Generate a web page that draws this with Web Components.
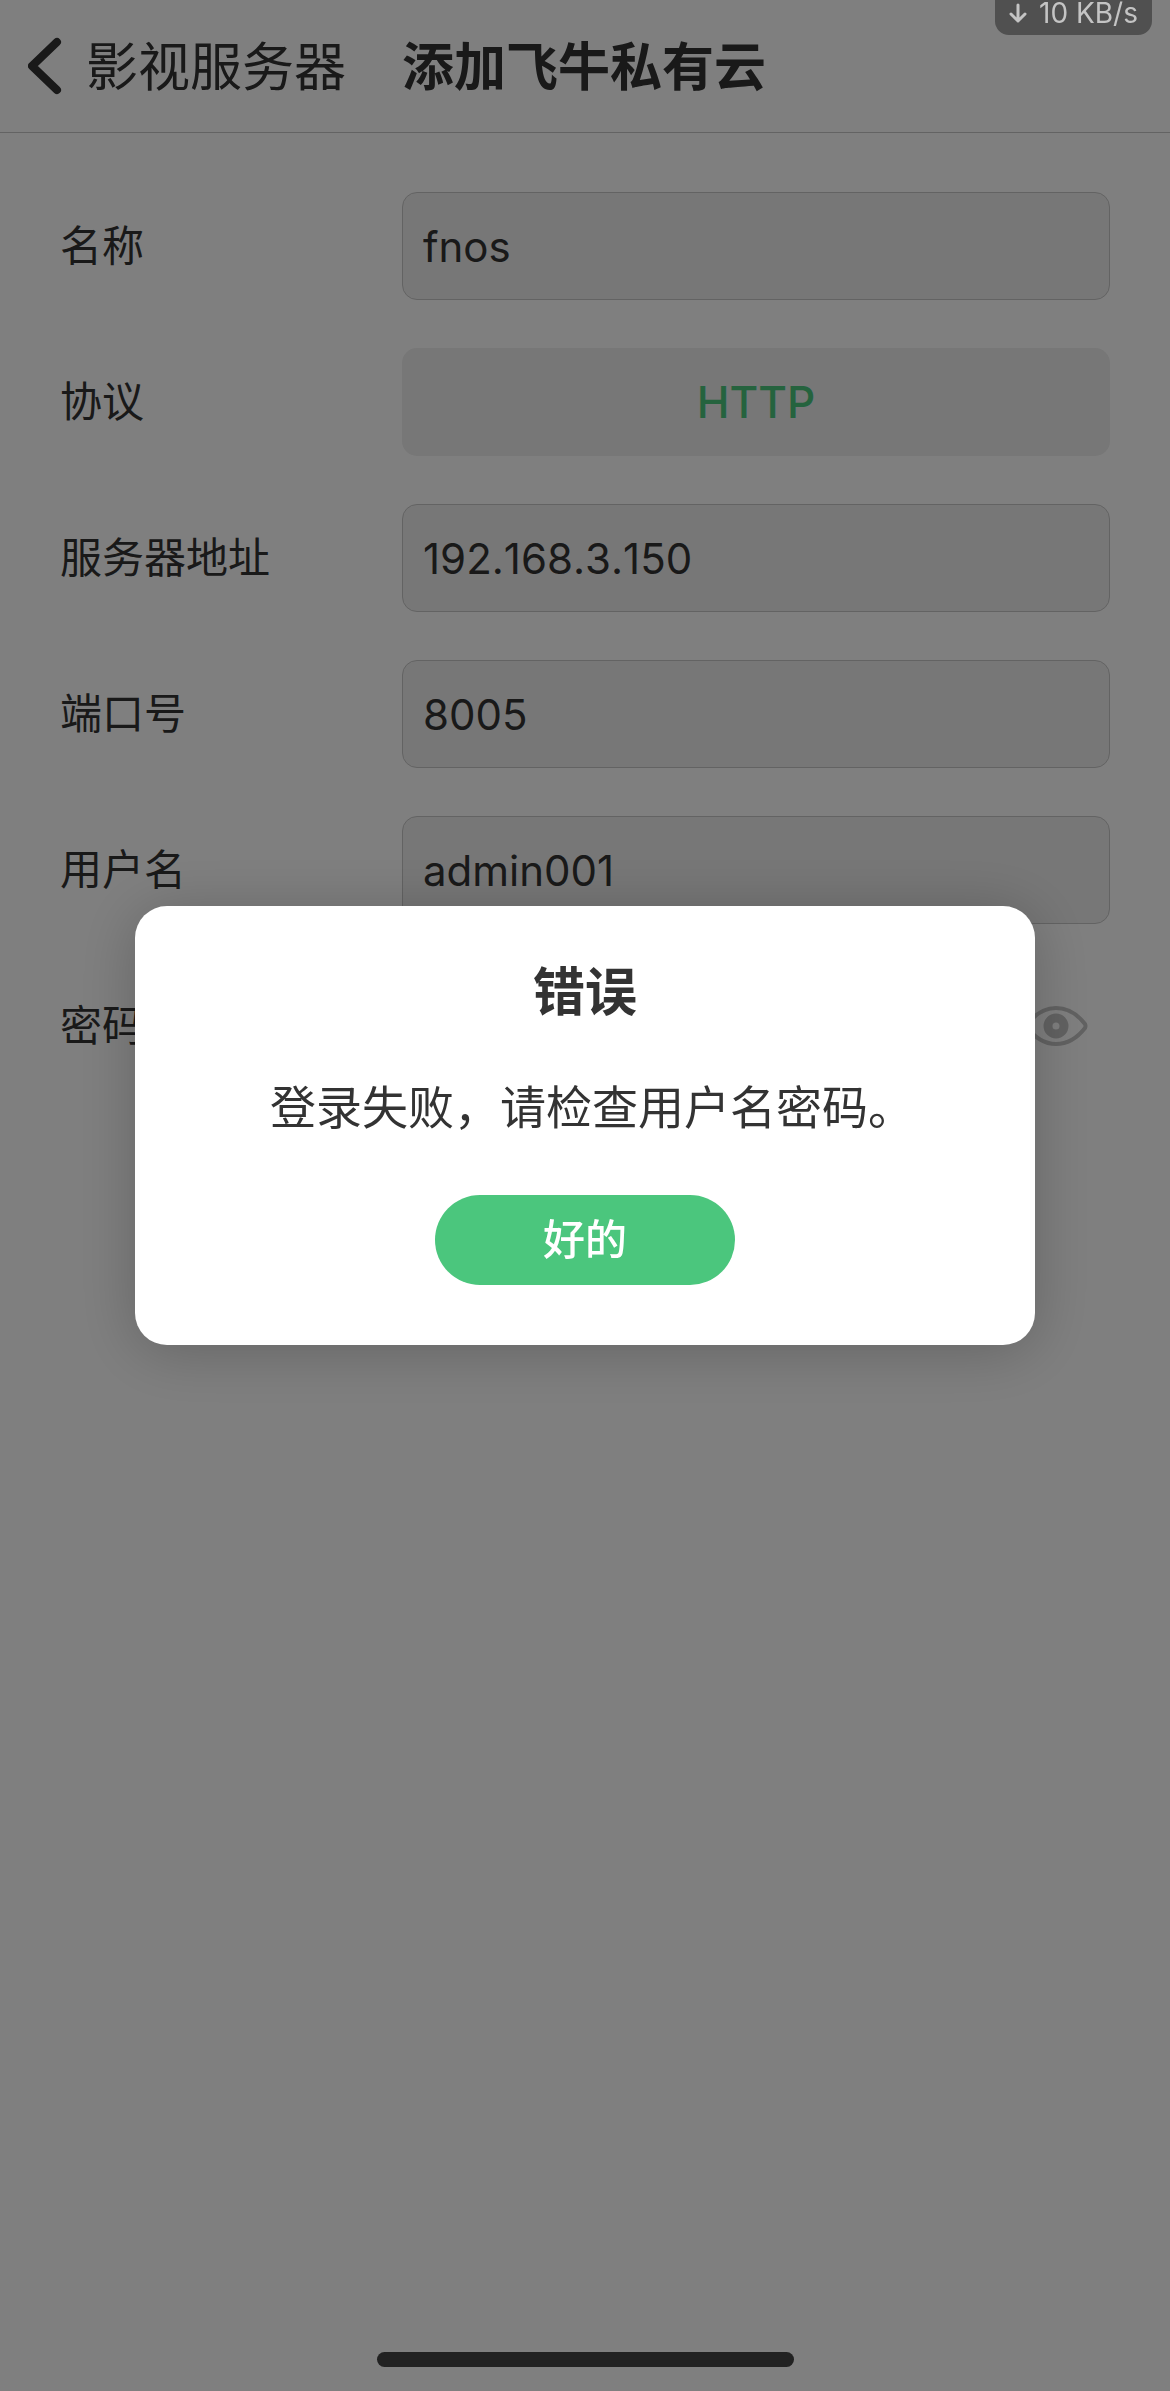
<!DOCTYPE html>
<html lang="zh-CN">
<head>
<meta charset="UTF-8">
<meta name="viewport" content="width=device-width, initial-scale=1">
<title>添加飞牛私有云</title>
<style>
    * {
        box-sizing: border-box;
    }

    body {
        margin: 0;
        min-height: 100vh;
        background: #fff;
        color: #333;
        font-family: Inter, "Noto Sans CJK SC", sans-serif;
        font-size: 42px;
        --green: #4bc67d;
        --field: #eee;
        --line: #c6c6c6;
    }

    .fields {
        display: flex;
        flex-direction: column;
        gap: 48px;
        margin: 0;
        padding: 60px;
    }
</style>
</head>
<body>
    <nav-header back="影视服务器">添加飞牛私有云</nav-header>

    <form class="fields">
        <text-field label="名称" value="fnos"></text-field>
        <choice-field label="协议">HTTP</choice-field>
        <text-field label="服务器地址" value="192.168.3.150"></text-field>
        <text-field label="端口号" value="8005"></text-field>
        <text-field label="用户名" value="admin001"></text-field>
        <password-field label="密码"></password-field>
    </form>

    <alert-dialog heading="错误" action="好的">登录失败，请检查用户名密码。</alert-dialog>
    <speed-badge>10 KB/s</speed-badge>
    <home-indicator></home-indicator>

<script>
const rowStyles = `
    :host {
        display: block;
    }

    * {
        box-sizing: border-box;
    }

    .row {
        display: grid;
        grid-template-columns: 342px 1fr;
        align-items: center;
        min-height: 108px;
    }

    label {
        line-height: 60px;
    }

    input, button {
        width: 100%;
        min-width: 0;
        height: 108px;
        margin: 0;
        border: 1px solid var(--line);
        border-radius: 15px;
        background: var(--field);
        color: inherit;
        font: inherit;
    }

    input {
        padding: 0 20px;
        font-kerning: none;
    }
`;

class NavHeader extends HTMLElement {
    connectedCallback() {
        this.attachShadow({ mode: 'open' });
        this.shadowRoot.innerHTML = `
            <style>
                :host {
                    display: block;
                }

                header {
                    display: grid;
                    grid-template-columns: 374px 1fr;
                    align-items: center;
                    height: 132px;
                    padding-left: 28px;
                    box-shadow: 0 1px 0 var(--line);
                    font-size: 52px;
                    line-height: 72px;
                }

                a {
                    display: flex;
                    align-items: center;
                    gap: 24px;
                    color: inherit;
                    text-decoration: none;
                    white-space: nowrap;
                }

                h1 {
                    margin: 0;
                    font-size: inherit;
                    font-weight: 600;
                }

                span, h1 {
                    padding-top: 4px;
                }
            </style>
            <header>
                <a href="#">
                    <svg width="34" height="58" viewBox="0 0 34 58" fill="none" stroke="currentColor" stroke-width="8" stroke-linecap="round" stroke-linejoin="round" aria-hidden="true">
                        <path d="M29 5 4 29l25 24"/>
                    </svg>
                    <span>${this.getAttribute('back')}</span>
                </a>
                <h1><slot></slot></h1>
            </header>
        `;
    }
}

class TextField extends HTMLElement {
    connectedCallback() {
        this.attachShadow({ mode: 'open' });
        this.shadowRoot.innerHTML = `
            <style>${rowStyles}</style>
            <div class="row">
                <label for="field">${this.getAttribute('label')}</label>
                <input id="field" type="text" value="${this.getAttribute('value')}">
            </div>
        `;
    }
}

class ChoiceField extends HTMLElement {
    connectedCallback() {
        this.attachShadow({ mode: 'open' });
        this.shadowRoot.innerHTML = `
            <style>
                ${rowStyles}

                button {
                    border: 0;
                    color: var(--green);
                    font-size: 44px;
                    font-weight: 500;
                }
            </style>
            <div class="row">
                <label for="choice">${this.getAttribute('label')}</label>
                <button id="choice" type="button"><slot></slot></button>
            </div>
        `;
    }
}

class PasswordField extends HTMLElement {
    connectedCallback() {
        this.attachShadow({ mode: 'open' });
        this.shadowRoot.innerHTML = `
            <style>
                ${rowStyles}

                .control {
                    display: grid;
                    grid-template-columns: 1fr 108px;
                }

                button {
                    display: grid;
                    place-items: center;
                    padding: 0;
                    border: 0;
                    background: none;
                    color: #c4c4c4;
                }
            </style>
            <div class="row">
                <label for="password">${this.getAttribute('label')}</label>
                <div class="control">
                    <input id="password" type="password">
                    <button type="button" aria-label="显示密码">
                        <svg width="64" height="40" viewBox="0 0 64 40" fill="none" stroke="currentColor">
                            <path stroke-width="4" stroke-linejoin="round" d="M2 20C10 9 20 2 32 2s22 7 29 16q1 2 0 4c-7 9-17 16-29 16S10 31 2 20Z"/>
                            <circle cx="32" cy="20" r="8" stroke-width="9"/>
                        </svg>
                    </button>
                </div>
            </div>
        `;
    }
}

class AlertDialog extends HTMLElement {
    connectedCallback() {
        this.attachShadow({ mode: 'open' });
        this.shadowRoot.innerHTML = `
            <style>
                :host {
                    position: fixed;
                    inset: 0;
                    box-sizing: border-box;
                    display: grid;
                    place-items: center;
                    padding: 0 60px 140px;
                    background: rgba(0, 0, 0, 0.5);
                }

                .dialog {
                    box-sizing: border-box;
                    display: flex;
                    flex-direction: column;
                    width: 100%;
                    max-width: 900px;
                    padding: 51px 135px 60px;
                    border-radius: 32px;
                    background: #fff;
                    box-shadow: 0 6px 60px rgba(0, 0, 0, 0.22);
                    line-height: 72px;
                }

                h2 {
                    margin: 0 0 42px;
                    font-size: 52px;
                    font-weight: 600;
                    text-align: center;
                }

                p {
                    margin: 0 0 52px;
                    font-size: 46px;
                    white-space: nowrap;
                }

                button {
                    align-self: center;
                    width: 300px;
                    height: 90px;
                    border: 0;
                    border-radius: 45px;
                    background: var(--green);
                    color: #fff;
                    font: inherit;
                    font-weight: 500;
                }
            </style>
            <div class="dialog" role="alertdialog" aria-modal="true" aria-labelledby="heading" aria-describedby="message">
                <h2 id="heading">${this.getAttribute('heading')}</h2>
                <p id="message"><slot></slot></p>
                <button type="button">${this.getAttribute('action')}</button>
            </div>
        `;
    }
}

class SpeedBadge extends HTMLElement {
    connectedCallback() {
        this.attachShadow({ mode: 'open' });
        this.shadowRoot.innerHTML = `
            <style>
                :host {
                    position: fixed;
                    top: 0;
                    right: 18px;
                    box-sizing: border-box;
                    display: flex;
                    align-items: center;
                    gap: 12px;
                    height: 35px;
                    padding: 0 14px 10px;
                    border-radius: 0 0 14px 14px;
                    background: #505050;
                    color: #c4c4c4;
                    font-size: 28px;
                    line-height: 24px;
                }
            </style>
            <svg width="18" height="20" viewBox="0 0 18 20" fill="none" stroke="currentColor" stroke-width="3" stroke-linecap="round" stroke-linejoin="round" aria-hidden="true">
                <path d="M9 2v16M2 11l7 7 7-7"/>
            </svg>
            <span><slot></slot></span>
        `;
    }
}

class HomeIndicator extends HTMLElement {
    connectedCallback() {
        this.attachShadow({ mode: 'open' });
        this.shadowRoot.innerHTML = `
            <style>
                :host {
                    position: fixed;
                    inset: auto 0 24px;
                    display: flex;
                    justify-content: center;
                }

                .bar {
                    width: 417px;
                    height: 15px;
                    border-radius: 8px;
                    background: #222;
                }
            </style>
            <div class="bar"></div>
        `;
    }
}

customElements.define('nav-header', NavHeader);
customElements.define('text-field', TextField);
customElements.define('choice-field', ChoiceField);
customElements.define('password-field', PasswordField);
customElements.define('alert-dialog', AlertDialog);
customElements.define('speed-badge', SpeedBadge);
customElements.define('home-indicator', HomeIndicator);
</script>
</body>
</html>
